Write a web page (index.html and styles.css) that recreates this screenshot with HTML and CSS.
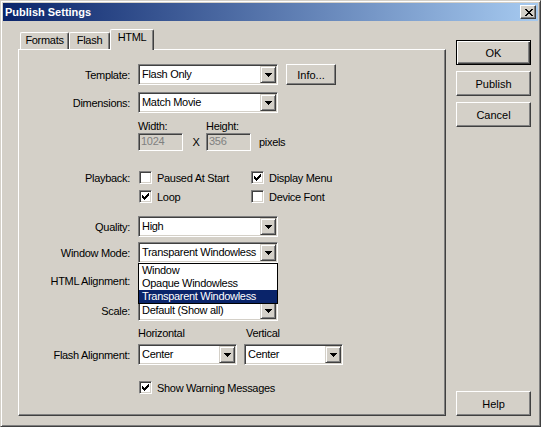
FILE: index.html
```html
<!DOCTYPE html>
<html lang="en">

<head>
    <meta charset="UTF-8">
    <title>Publish Settings</title>
    <link rel="stylesheet" href="styles.css">
</head>

<body>
    <div class="window">
        <div class="titlebar">
            <span class="title">Publish Settings</span>
            <span class="close">
                <svg width="8" height="7" viewBox="0 0 8 7"><path d="M0 0h2v1h-2zM6 0h2v1h-2zM1 1h2v1h-2zM5 1h2v1h-2zM2 2h4v1h-4zM3 3h2v1h-2zM2 4h4v1h-4zM1 5h2v1h-2zM5 5h2v1h-2zM0 6h2v1h-2zM6 6h2v1h-2z"/></svg>
            </span>
        </div>

        <div class="client">
            <div class="tabctl">
                <div class="tabs">
                    <div class="tab tab-formats">Formats</div>
                    <div class="tab tab-flash">Flash</div>
                    <div class="tab tab-html active">HTML</div>
                </div>

                <div class="panel">
                    <div class="row r-template">
                        <span class="lbl">Template:</span>
                        <div class="combo">
                            <span class="val">Flash Only</span>
                            <span class="arrow"><svg width="7" height="4" viewBox="0 0 7 4"><path d="M0 0h7v1h-1v1h-1v1h-1v1h-1v-1h-1v-1h-1v-1h-1z"/></svg></span>
                        </div>
                        <button class="btn info">Info...</button>
                    </div>

                    <div class="row r-dims">
                        <span class="lbl">Dimensions:</span>
                        <div class="combo">
                            <span class="val">Match Movie</span>
                            <span class="arrow"><svg width="7" height="4" viewBox="0 0 7 4"><path d="M0 0h7v1h-1v1h-1v1h-1v1h-1v-1h-1v-1h-1v-1h-1z"/></svg></span>
                        </div>
                    </div>

                    <div class="row indent r-sizelbl">
                        <span class="sizelbl">Width:</span>
                        <span>Height:</span>
                    </div>
                    <div class="row indent r-sizeinp">
                        <span class="txt">1024</span>
                        <span class="times">X</span>
                        <span class="txt">356</span>
                        <span class="unit">pixels</span>
                    </div>

                    <div class="row r-play1">
                        <span class="lbl">Playback:</span>
                        <span class="chk col1"><span class="box"></span>Paused At Start</span>
                        <span class="chk"><span class="box"><svg width="7" height="7" viewBox="0 0 7 7"><path d="M0 2h1v1h1v1h1v-1h1v-1h1v-1h1v-1h1v3h-1v1h-1v1h-1v1h-1v1h-1v-1h-1v-1h-1z"/></svg></span>Display Menu</span>
                    </div>
                    <div class="row indent r-play2">
                        <span class="chk col1"><span class="box"><svg width="7" height="7" viewBox="0 0 7 7"><path d="M0 2h1v1h1v1h1v-1h1v-1h1v-1h1v-1h1v3h-1v1h-1v1h-1v1h-1v1h-1v-1h-1v-1h-1z"/></svg></span>Loop</span>
                        <span class="chk"><span class="box"></span>Device Font</span>
                    </div>

                    <div class="row r-quality">
                        <span class="lbl">Quality:</span>
                        <div class="combo">
                            <span class="val">High</span>
                            <span class="arrow"><svg width="7" height="4" viewBox="0 0 7 4"><path d="M0 0h7v1h-1v1h-1v1h-1v1h-1v-1h-1v-1h-1v-1h-1z"/></svg></span>
                        </div>
                    </div>

                    <div class="row r-wmode">
                        <span class="lbl">Window Mode:</span>
                        <div class="combo">
                            <span class="val">Transparent Windowless</span>
                            <span class="arrow"><svg width="7" height="4" viewBox="0 0 7 4"><path d="M0 0h7v1h-1v1h-1v1h-1v1h-1v-1h-1v-1h-1v-1h-1z"/></svg></span>
                            <div class="dropdown">
                                <div>Window</div>
                                <div>Opaque Windowless</div>
                                <div class="sel">Transparent Windowless</div>
                            </div>
                        </div>
                    </div>

                    <div class="row r-halign">
                        <span class="lbl">HTML Alignment:</span>
                        <div class="combo">
                            <span class="val"></span>
                            <span class="arrow"><svg width="7" height="4" viewBox="0 0 7 4"><path d="M0 0h7v1h-1v1h-1v1h-1v1h-1v-1h-1v-1h-1v-1h-1z"/></svg></span>
                        </div>
                    </div>

                    <div class="row r-scale">
                        <span class="lbl">Scale:</span>
                        <div class="combo">
                            <span class="val">Default (Show all)</span>
                            <span class="arrow"><svg width="7" height="4" viewBox="0 0 7 4"><path d="M0 0h7v1h-1v1h-1v1h-1v1h-1v-1h-1v-1h-1v-1h-1z"/></svg></span>
                        </div>
                    </div>

                    <div class="row indent r-alignlbl">
                        <span class="alignlbl">Horizontal</span>
                        <span>Vertical</span>
                    </div>
                    <div class="row r-falign">
                        <span class="lbl">Flash Alignment:</span>
                        <div class="combo narrow">
                            <span class="val">Center</span>
                            <span class="arrow"><svg width="7" height="4" viewBox="0 0 7 4"><path d="M0 0h7v1h-1v1h-1v1h-1v1h-1v-1h-1v-1h-1v-1h-1z"/></svg></span>
                        </div>
                        <div class="combo narrow second">
                            <span class="val">Center</span>
                            <span class="arrow"><svg width="7" height="4" viewBox="0 0 7 4"><path d="M0 0h7v1h-1v1h-1v1h-1v1h-1v-1h-1v-1h-1v-1h-1z"/></svg></span>
                        </div>
                    </div>

                    <div class="row indent r-warn">
                        <span class="chk"><span class="box"><svg width="7" height="7" viewBox="0 0 7 7"><path d="M0 2h1v1h1v1h1v-1h1v-1h1v-1h1v-1h1v3h-1v1h-1v1h-1v1h-1v1h-1v-1h-1v-1h-1z"/></svg></span>Show Warning Messages</span>
                    </div>
                </div>
            </div>

            <div class="buttons">
                <button class="btn default">OK</button>
                <button class="btn">Publish</button>
                <button class="btn">Cancel</button>
                <button class="btn help">Help</button>
            </div>
        </div>
    </div>
</body>

</html>
```

FILE: styles.css
```css
* {
    box-sizing: border-box;
}

body {
    margin: 0;
    font-family: "Liberation Sans", Arial, sans-serif;
    font-size: 11px;
    letter-spacing: -0.3px;
    color: #000;
    background: #d4d0c8;
}

.window {
    width: 541px;
    height: 427px;
    display: flex;
    flex-direction: column;
    padding: 2px;
    background: #d4d0c8;
    border: 1px solid;
    border-color: #d4d0c8 #404040 #404040 #d4d0c8;
    box-shadow: inset 1px 1px #fff, inset -1px -1px #808080;
}

/* title bar */
.titlebar {
    height: 18px;
    display: flex;
    align-items: center;
    padding: 0 2px;
    background: linear-gradient(to right, #0a246a, #a6caf0);
}

.title {
    flex: 1;
    color: #fff;
    font-weight: bold;
    letter-spacing: 0;
}

.close {
    width: 16px;
    height: 14px;
    display: flex;
    align-items: center;
    justify-content: center;
    padding-left: 1px;
    background: #d4d0c8;
    border: 1px solid;
    border-color: #fff #404040 #404040 #fff;
    box-shadow: inset -1px -1px #808080;
}

.client {
    flex: 1;
    display: flex;
    padding: 8px 0 0 15px;
}

/* tab control */
.tabctl {
    width: 428px;
}

.tabs {
    height: 20px;
    display: flex;
    align-items: flex-end;
    padding-left: 2px;
}

.tab {
    height: 17px;
    padding-top: 1px;
    line-height: 13px;
    text-align: center;
    border: 1px solid;
    border-bottom: none;
    border-color: #fff #404040 #404040 #fff;
    border-radius: 2px 2px 0 0;
    box-shadow: inset -1px 0 #808080;
}

.tab-formats {
    width: 49px;
}

.tab-flash {
    width: 41px;
}

.tab.active {
    position: relative;
    width: 44px;
    height: 21px;
    margin-bottom: -1px;
    padding-top: 1px;
    background: #d4d0c8;
}

.panel {
    height: 367px;
    padding-top: 14px;
    border: 1px solid;
    border-color: #fff #404040 #404040 #fff;
    box-shadow: inset -1px -1px #808080;
}

/* rows */
.row {
    display: flex;
    align-items: center;
}

.row.indent {
    padding-left: 119px;
}

.lbl {
    width: 111px;
    margin-right: 8px;
    flex: none;
    text-align: right;
}

.r-dims { margin-top: 7px; }
.r-sizelbl { margin-top: 6px; height: 13px; }
.r-sizeinp { margin-top: 1px; height: 18px; }
.r-play1 { margin-top: 19px; height: 15px; }
.r-play2 { margin-top: 4px; height: 15px; }
.r-quality { margin-top: 12px; }
.r-wmode { margin-top: 5px; }
.r-halign { margin-top: 7px; }
.r-scale { margin-top: 9px; }
.r-alignlbl { margin-top: 5px; height: 13px; }
.r-falign { margin-top: 5px; }
.r-warn { margin-top: 15px; height: 15px; }

.sizelbl {
    width: 68px;
}

.alignlbl {
    width: 108px;
}

/* combo box */
.combo {
    position: relative;
    width: 140px;
    height: 21px;
    display: flex;
    align-items: center;
    padding: 1px;
    background: #fff;
    border: 1px solid;
    border-color: #808080 #fff #fff #808080;
    box-shadow: inset 1px 1px #404040, inset -1px -1px #d4d0c8;
}

.combo.narrow {
    width: 99px;
}

.combo.second {
    margin-left: 7px;
}

.combo .val {
    flex: 1;
    padding-left: 2px;
    padding-bottom: 1px;
    white-space: nowrap;
    overflow: hidden;
}

.arrow {
    width: 16px;
    height: 17px;
    flex: none;
    display: flex;
    align-items: center;
    justify-content: center;
    background: #d4d0c8;
    border: 1px solid;
    border-color: #d4d0c8 #404040 #404040 #d4d0c8;
    box-shadow: inset 1px 1px #fff, inset -1px -1px #808080;
}

.dropdown {
    position: absolute;
    z-index: 2;
    top: 20px;
    left: -1px;
    width: 140px;
    background: #fff;
    border: 1px solid #000;
}

.dropdown div {
    height: 13px;
    line-height: 13px;
    padding-left: 3px;
    white-space: nowrap;
}

.dropdown .sel {
    background: #0a246a;
    color: #fff;
}

/* disabled text field */
.txt {
    width: 45px;
    height: 18px;
    padding-left: 2px;
    line-height: 14px;
    color: #808080;
    background: #d4d0c8;
    border: 1px solid;
    border-color: #808080 #fff #fff #808080;
    box-shadow: inset 1px 1px #404040, inset -1px -1px #d4d0c8;
}

.times {
    width: 23px;
    padding-left: 3px;
    text-align: center;
}

.unit {
    margin-left: 8px;
}

/* check boxes */
.chk {
    display: flex;
    align-items: center;
}

.chk.col1 {
    width: 112px;
}

.box {
    width: 13px;
    height: 13px;
    margin: 0 5px 0 1px;
    display: flex;
    align-items: center;
    justify-content: center;
    background: #fff;
    border: 1px solid;
    border-color: #808080 #fff #fff #808080;
    box-shadow: inset 1px 1px #404040, inset -1px -1px #d4d0c8;
}

/* push buttons */
.btn {
    width: 75px;
    height: 25px;
    padding: 0;
    font: inherit;
    color: #000;
    background: #d4d0c8;
    border: 1px solid;
    border-color: #fff #404040 #404040 #fff;
    box-shadow: inset -1px -1px #808080;
}

.btn.default {
    border-color: #000;
    box-shadow: inset 1px 1px #fff, inset -1px -1px #404040, inset -2px -2px #808080;
}

.btn.info {
    width: 50px;
    height: 21px;
    margin-left: 8px;
}

.buttons {
    width: 75px;
    height: 376px;
    margin: 11px 0 0 10px;
    display: flex;
    flex-direction: column;
    gap: 6px;
}

.btn.help {
    margin-top: auto;
}
```
